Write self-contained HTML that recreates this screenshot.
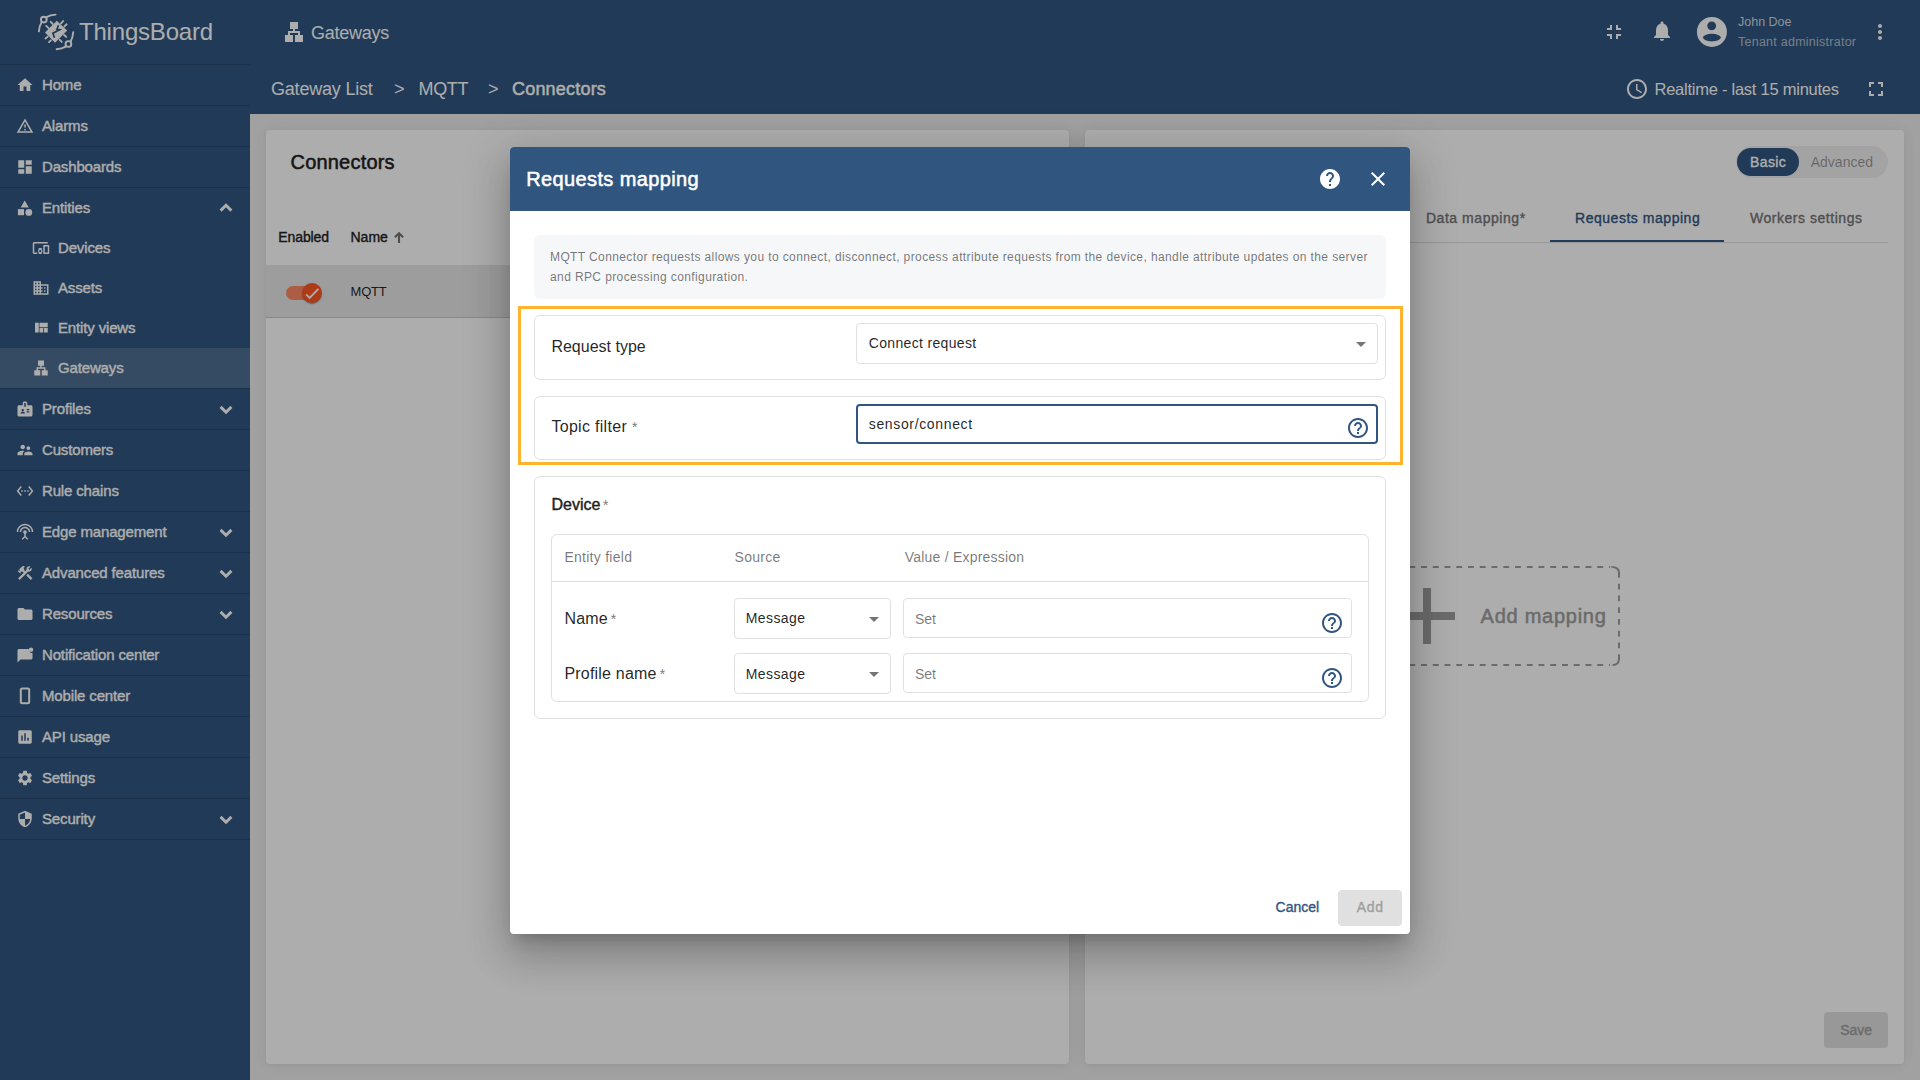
<!DOCTYPE html>
<html><head><meta charset="utf-8"><style>
*{box-sizing:border-box;margin:0;padding:0}
html,body{width:1920px;height:1080px;overflow:hidden}
body{font-family:"Liberation Sans",sans-serif;background:#eeeeee;position:relative;color:rgba(0,0,0,.87)}
.abs{position:absolute}
.tx{line-height:1;white-space:nowrap}
svg{display:block}
#side{position:absolute;left:0;top:0;width:250px;height:1080px;background:#305680}
#top{position:absolute;left:250px;top:0;width:1670px;height:114px;background:#305680}
.card{position:absolute;background:#fff;border-radius:4px;box-shadow:0 0 18px 2px rgba(0,0,0,.05),0 1px 4px rgba(0,0,0,.04)}
#backdrop{position:absolute;left:0;top:0;width:1920px;height:1080px;background:rgba(0,0,0,.32)}
#dlg{position:absolute;left:510px;top:147px;width:900px;height:787px;background:#fff;border-radius:4px;overflow:hidden;box-shadow:0 11px 15px -7px rgba(0,0,0,.2),0 24px 38px 3px rgba(0,0,0,.14),0 9px 46px 8px rgba(0,0,0,.12)}

</style></head><body>
<div id="side">
<div class="abs" style="left:0;top:64px;width:250px;height:1px;background:rgba(0,0,0,.12)"></div>
<svg class="abs" style="left:34px;top:10px" width="44" height="44" viewBox="0 0 44 44">
<g fill="none" stroke="#fff" stroke-width="1.9" stroke-linecap="round">
<circle cx="9.8" cy="9.6" r="2.9"/>
<path d="M12.6 7.1 Q16 5 21.6 4.6"/>
<path d="M7.4 12.7 Q5.2 16 4.9 21.4"/>
<circle cx="34.4" cy="34" r="2.9"/>
<path d="M31.7 36.6 Q28 38.8 22.6 39.2"/>
<path d="M36.8 31.2 Q38.8 27.5 39.2 22.2"/>
<path d="M12.2 15.9 L14.6 18.1 M16.7 11.8 L18.7 13.9 M29.1 11 L27.1 13.3 M32.6 14.3 L30.4 16.4 M32.2 26.9 L30.1 25 M27.7 31.8 L25.8 29.8 M11.4 28.5 L13.6 26.7 M15 32.2 L16.9 30.3"/>
</g>
<path fill="#fff" d="M22.8 10.8 L33.2 20.4 L21 32.8 L11 22.6 Z"/>
<path d="M24.5 15.3 L22.9 19.3 L25.7 19.7 L18.9 23.2 L20.5 27.8" fill="none" stroke="#305680" stroke-width="1.7" stroke-linejoin="miter"/>
</svg>
<div class="abs tx" style="left:79px;top:19.80px;font-size:24px;font-weight:normal;color:#ffffff;letter-spacing:-0.2px;">ThingsBoard</div>
<div class="abs" style="left:0;top:105px;width:250px;height:1px;background:rgba(0,0,0,.12)"></div>
<svg class="abs" style="left:16px;top:76px;" width="18" height="18" viewBox="0 0 24 24"><path fill="#fff" d="M10 20v-6h4v6h5v-8h3L12 3 2 12h3v8z"/></svg>
<div class="abs tx" style="left:42px;top:77.45px;font-size:15px;font-weight:normal;color:#ffffff;letter-spacing:-0.15px;-webkit-text-stroke:0.39px #ffffff;">Home</div>
<div class="abs" style="left:0;top:146px;width:250px;height:1px;background:rgba(0,0,0,.12)"></div>
<svg class="abs" style="left:16px;top:117px;" width="18" height="18" viewBox="0 0 24 24"><path fill="#fff" d="M12 5.99L19.53 19H4.47L12 5.99M12 2L1 21h22L12 2zm1 14h-2v2h2v-2zm0-6h-2v4h2v-4z"/></svg>
<div class="abs tx" style="left:42px;top:118.45px;font-size:15px;font-weight:normal;color:#ffffff;letter-spacing:-0.15px;-webkit-text-stroke:0.39px #ffffff;">Alarms</div>
<div class="abs" style="left:0;top:187px;width:250px;height:1px;background:rgba(0,0,0,.12)"></div>
<svg class="abs" style="left:16px;top:158px;" width="18" height="18" viewBox="0 0 24 24"><path fill="#fff" d="M3 13h8V3H3v10zm0 8h8v-6H3v6zm10 0h8V11h-8v10zm0-18v6h8V3h-8z"/></svg>
<div class="abs tx" style="left:42px;top:159.45px;font-size:15px;font-weight:normal;color:#ffffff;letter-spacing:-0.15px;-webkit-text-stroke:0.39px #ffffff;">Dashboards</div>
<div class="abs" style="left:0;top:388px;width:250px;height:1px;background:rgba(0,0,0,.12)"></div>
<svg class="abs" style="left:16px;top:200px" width="18" height="18" viewBox="0 0 18 18"><path fill="#fff" d="M8.7 0.6L12.8 7.4H4.6z"/><rect x="1.9" y="9.1" width="6.1" height="6.1" fill="#fff"/><circle cx="12.8" cy="12.4" r="3.4" fill="#fff"/></svg>
<div class="abs tx" style="left:42px;top:200.45px;font-size:15px;font-weight:normal;color:#ffffff;letter-spacing:-0.15px;-webkit-text-stroke:0.39px #ffffff;">Entities</div>
<svg class="abs" style="left:214px;top:196px" width="24" height="24" viewBox="0 0 24 24"><path fill="none" stroke="#fff" stroke-width="2.9" d="M6.6 14.6L12 9.3L17.4 14.6"/></svg>
<svg class="abs" style="left:32px;top:239px;" width="18" height="18" viewBox="0 0 24 24"><path fill="#fff" d="M3 6h18V4H3c-1.1 0-2 .9-2 2v12c0 1.1.9 2 2 2h4v-2H3V6zm10 6H9v1.78c-.61.55-1 1.33-1 2.22s.39 1.67 1 2.22V20h4v-1.78c.61-.55 1-1.34 1-2.22s-.39-1.67-1-2.22V12zm-2 5.5c-.83 0-1.5-.67-1.5-1.5s.67-1.5 1.5-1.5 1.5.67 1.5 1.5-.67 1.5-1.5 1.5zM22 8h-6c-.5 0-1 .5-1 1v10c0 .5.5 1 1 1h6c.5 0 1-.5 1-1V9c0-.5-.5-1-1-1zm-1 10h-4v-8h4v8z"/></svg>
<div class="abs tx" style="left:58px;top:240.45px;font-size:15px;font-weight:normal;color:#ffffff;letter-spacing:-0.15px;-webkit-text-stroke:0.39px #ffffff;">Devices</div>
<svg class="abs" style="left:32px;top:279px;" width="18" height="18" viewBox="0 0 24 24"><path fill="#fff" d="M12 7V3H2v18h20V7H12zM6 19H4v-2h2v2zm0-4H4v-2h2v2zm0-4H4V9h2v2zm0-4H4V5h2v2zm4 12H8v-2h2v2zm0-4H8v-2h2v2zm0-4H8V9h2v2zm0-4H8V5h2v2zm10 12h-8v-2h2v-2h-2v-2h2v-2h-2V9h8v10zm-2-8h-2v2h2v-2zm0 4h-2v2h2v-2z"/></svg>
<div class="abs tx" style="left:58px;top:280.45px;font-size:15px;font-weight:normal;color:#ffffff;letter-spacing:-0.15px;-webkit-text-stroke:0.39px #ffffff;">Assets</div>
<svg class="abs" style="left:32px;top:319px;" width="18" height="18" viewBox="0 0 24 24"><path fill="#fff" d="M10 18h5v-6h-5v6zm-6 0h5V5H4v13zm12 0h5v-6h-5v6zM10 5v6h11V5H10z"/></svg>
<div class="abs tx" style="left:58px;top:320.45px;font-size:15px;font-weight:normal;color:#ffffff;letter-spacing:-0.15px;-webkit-text-stroke:0.39px #ffffff;">Entity views</div>
<div class="abs" style="left:0;top:348px;width:250px;height:40px;background:rgba(255,255,255,.15)"></div>
<svg class="abs" style="left:32px;top:359px;" width="18" height="18" viewBox="0 0 24 24"><path fill="#fff" d="M13 22h8v-7h-3v-4h-5V9h3V2H8v7h3v2H6v4H3v7h8v-7H8v-2h8v2h-3z"/></svg>
<div class="abs tx" style="left:58px;top:360.45px;font-size:15px;font-weight:normal;color:#ffffff;letter-spacing:-0.15px;-webkit-text-stroke:0.39px #ffffff;">Gateways</div>
<div class="abs" style="left:0;top:429px;width:250px;height:1px;background:rgba(0,0,0,.12)"></div>
<svg class="abs" style="left:16px;top:400px;" width="18" height="18" viewBox="0 0 24 24"><path fill="#fff" d="M20 7h-5V4c0-1.1-.9-2-2-2h-2c-1.1 0-2 .9-2 2v3H4c-1.1 0-2 .9-2 2v11c0 1.1.9 2 2 2h16c1.1 0 2-.9 2-2V9c0-1.1-.9-2-2-2zM9 12c.83 0 1.5.67 1.5 1.5S9.830 15 9 15s-1.5-.67-1.5-1.5S8.17 12 9 12zm3 6H6v-.43c0-.6.36-1.15.92-1.39.64-.28 1.34-.43 2.08-.43s1.44.15 2.08.43c.55.24.92.78.92 1.39V18zm1-9h-2V4h2v5zm4.25 7.5h-2.5c-.41 0-.75-.34-.75-.75s.34-.75.75-.75h2.5c.41 0 .75.34.75.75s-.34.75-.75.75zm0-3h-2.5c-.41 0-.75-.34-.75-.75s.34-.75.75-.75h2.5c.41 0 .75.34.75.75s-.34.75-.75.75z"/></svg>
<div class="abs tx" style="left:42px;top:401.45px;font-size:15px;font-weight:normal;color:#ffffff;letter-spacing:-0.15px;-webkit-text-stroke:0.39px #ffffff;">Profiles</div>
<svg class="abs" style="left:214px;top:397px" width="24" height="24" viewBox="0 0 24 24"><path fill="none" stroke="#fff" stroke-width="2.9" d="M6.6 9.9L12 15.2L17.4 9.9"/></svg>
<div class="abs" style="left:0;top:470px;width:250px;height:1px;background:rgba(0,0,0,.12)"></div>
<svg class="abs" style="left:16px;top:441px;" width="18" height="18" viewBox="0 0 24 24"><path fill="#fff" d="M16.5 12c1.38 0 2.49-1.12 2.49-2.5S17.88 7 16.5 7C15.12 7 14 8.12 14 9.5s1.12 2.5 2.5 2.5zM9 11c1.66 0 2.99-1.34 2.99-3S10.66 5 9 5C7.34 5 6 6.34 6 8s1.34 3 3 3zm7.5 3c-1.83 0-5.5.92-5.5 2.75V19h11v-2.25c0-1.830-3.67-2.75-5.5-2.75zM9 13c-2.33 0-7 1.17-7 3.5V19h7v-2.25c0-.85.33-2.34 2.37-3.47C10.5 13.1 9.66 13 9 13z"/></svg>
<div class="abs tx" style="left:42px;top:442.45px;font-size:15px;font-weight:normal;color:#ffffff;letter-spacing:-0.15px;-webkit-text-stroke:0.39px #ffffff;">Customers</div>
<div class="abs" style="left:0;top:511px;width:250px;height:1px;background:rgba(0,0,0,.12)"></div>
<svg class="abs" style="left:16px;top:482px;" width="18" height="18" viewBox="0 0 24 24"><path fill="#fff" d="M7.77 6.76L6.23 5.48.82 12l5.41 6.52 1.54-1.28L3.42 12l4.35-5.24zM7 13h2v-2H7v2zm10-2h-2v2h2v-2zm-6 2h2v-2h-2v2zm6.77-7.52l-1.54 1.28L20.58 12l-4.35 5.24 1.54 1.28L23.18 12l-5.41-6.52z"/></svg>
<div class="abs tx" style="left:42px;top:483.45px;font-size:15px;font-weight:normal;color:#ffffff;letter-spacing:-0.15px;-webkit-text-stroke:0.39px #ffffff;">Rule chains</div>
<div class="abs" style="left:0;top:552px;width:250px;height:1px;background:rgba(0,0,0,.12)"></div>
<svg class="abs" style="left:16px;top:523px;" width="18" height="18" viewBox="0 0 24 24"><path fill="#fff" d="M12 5c-3.87 0-7 3.13-7 7h2c0-2.76 2.24-5 5-5s5 2.24 5 5h2c0-3.87-3.13-7-7-7zm1 9.29c.88-.39 1.5-1.26 1.5-2.29 0-1.38-1.12-2.5-2.5-2.5S9.5 10.62 9.5 12c0 1.02.62 1.9 1.5 2.29v3.3L7.59 21 9 22.41l3-3 3 3L16.41 21 13 17.590v-3.3zM12 1C5.93 1 1 5.93 1 12h2c0-4.97 4.03-9 9-9s9 4.03 9 9h2c0-6.07-4.93-11-11-11z"/></svg>
<div class="abs tx" style="left:42px;top:524.45px;font-size:15px;font-weight:normal;color:#ffffff;letter-spacing:-0.15px;-webkit-text-stroke:0.39px #ffffff;">Edge management</div>
<svg class="abs" style="left:214px;top:520px" width="24" height="24" viewBox="0 0 24 24"><path fill="none" stroke="#fff" stroke-width="2.9" d="M6.6 9.9L12 15.2L17.4 9.9"/></svg>
<div class="abs" style="left:0;top:593px;width:250px;height:1px;background:rgba(0,0,0,.12)"></div>
<svg class="abs" style="left:16px;top:564px;" width="18" height="18" viewBox="0 0 24 24"><path fill="#fff" d="M13.78 15.3L19.78 21.3L21.89 19.14L15.89 13.14L13.78 15.3M17.5 10.1C17.11 10.1 16.69 10.05 16.36 9.91L4.97 21.25L2.86 19.14L10.27 11.74L8.5 9.96L7.78 10.66L6.33 9.25V12.11L5.63 12.81L2.11 9.25L2.81 8.55H5.62L4.22 7.14L7.78 3.58C8.95 2.41 10.83 2.41 12 3.58L9.89 5.740L11.3 7.14L10.59 7.85L12.38 9.63L14.2 7.75C14.06 7.42 14 7 14 6.63C14 4.66 15.55 3.11 17.5 3.11C18.09 3.11 18.61 3.25 19.08 3.53L16.41 6.2L17.91 7.7L20.58 5.03C20.86 5.5 21 6 21 6.63C21 8.55 19.45 10.1 17.5 10.1Z"/></svg>
<div class="abs tx" style="left:42px;top:565.45px;font-size:15px;font-weight:normal;color:#ffffff;letter-spacing:-0.15px;-webkit-text-stroke:0.39px #ffffff;">Advanced features</div>
<svg class="abs" style="left:214px;top:561px" width="24" height="24" viewBox="0 0 24 24"><path fill="none" stroke="#fff" stroke-width="2.9" d="M6.6 9.9L12 15.2L17.4 9.9"/></svg>
<div class="abs" style="left:0;top:634px;width:250px;height:1px;background:rgba(0,0,0,.12)"></div>
<svg class="abs" style="left:16px;top:605px;" width="18" height="18" viewBox="0 0 24 24"><path fill="#fff" d="M10 4H4c-1.1 0-1.99.9-1.99 2L2 18c0 1.1.9 2 2 2h16c1.1 0 2-.9 2-2V8c0-1.1-.9-2-2-2h-8l-2-2z"/></svg>
<div class="abs tx" style="left:42px;top:606.45px;font-size:15px;font-weight:normal;color:#ffffff;letter-spacing:-0.15px;-webkit-text-stroke:0.39px #ffffff;">Resources</div>
<svg class="abs" style="left:214px;top:602px" width="24" height="24" viewBox="0 0 24 24"><path fill="none" stroke="#fff" stroke-width="2.9" d="M6.6 9.9L12 15.2L17.4 9.9"/></svg>
<div class="abs" style="left:0;top:675px;width:250px;height:1px;background:rgba(0,0,0,.12)"></div>
<svg class="abs" style="left:16px;top:646px;" width="18" height="18" viewBox="0 0 24 24"><path fill="#fff" d="M20 2a3 3 0 1 0 0 6 3 3 0 0 0 0-6zM17 4H4c-1.1 0-2 .9-2 2v16l4-4h14c1.1 0 2-.9 2-2V9.3A4.5 4.5 0 0 1 17 4z"/></svg>
<div class="abs tx" style="left:42px;top:647.45px;font-size:15px;font-weight:normal;color:#ffffff;letter-spacing:-0.15px;-webkit-text-stroke:0.39px #ffffff;">Notification center</div>
<div class="abs" style="left:0;top:716px;width:250px;height:1px;background:rgba(0,0,0,.12)"></div>
<svg class="abs" style="left:0px;top:676px" width="50" height="40" viewBox="0 676 50 40"><rect x="20.8" y="688.5" width="8.4" height="14.8" rx="1.5" fill="none" stroke="#fff" stroke-width="2"/></svg>
<div class="abs tx" style="left:42px;top:688.45px;font-size:15px;font-weight:normal;color:#ffffff;letter-spacing:-0.15px;-webkit-text-stroke:0.39px #ffffff;">Mobile center</div>
<div class="abs" style="left:0;top:757px;width:250px;height:1px;background:rgba(0,0,0,.12)"></div>
<svg class="abs" style="left:16px;top:728px;" width="18" height="18" viewBox="0 0 24 24"><path fill="#fff" d="M19 3H5c-1.1 0-2 .9-2 2v14c0 1.1.9 2 2 2h14c1.1 0 2-.9 2-2V5c0-1.1-.9-2-2-2zM9 17H7v-7h2v7zm4 0h-2V7h2v10zm4 0h-2v-4h2v4z"/></svg>
<div class="abs tx" style="left:42px;top:729.45px;font-size:15px;font-weight:normal;color:#ffffff;letter-spacing:-0.15px;-webkit-text-stroke:0.39px #ffffff;">API usage</div>
<div class="abs" style="left:0;top:798px;width:250px;height:1px;background:rgba(0,0,0,.12)"></div>
<svg class="abs" style="left:16px;top:769px;" width="18" height="18" viewBox="0 0 24 24"><path fill="#fff" d="M19.14 12.94c.04-.3.06-.61.06-.94 0-.32-.02-.64-.07-.94l2.03-1.58c.18-.14.23-.41.12-.61l-1.92-3.32c-.12-.22-.37-.29-.59-.22l-2.39.96c-.5-.38-1.03-.7-1.62-.94l-.36-2.54c-.04-.24-.24-.41-.48-.41h-3.84c-.24 0-.43.17-.47.41l-.36 2.54c-.59.24-1.13.57-1.62.94l-2.39-.96c-.22-.08-.47 0-.59.22L2.74 8.87c-.12.21-.08.47.12.61l2.03 1.58c-.05.3-.09.63-.09.94s.02.64.07.94l-2.03 1.58c-.18.14-.23.41-.12.61l1.92 3.32c.12.22.37.29.59.22l2.39-.96c.5.38 1.03.7 1.62.94l.36 2.54c.05.24.24.41.48.41h3.84c.24 0 .44-.17.47-.41l.36-2.54c.59-.24 1.13-.56 1.62-.94l2.39.96c.22.08.47 0 .59-.22l1.92-3.32c.12-.22.07-.47-.12-.61l-2.01-1.58zM12 15.6c-1.98 0-3.6-1.62-3.6-3.6s1.62-3.6 3.6-3.6 3.6 1.62 3.6 3.6-1.62 3.6-3.6 3.6z"/></svg>
<div class="abs tx" style="left:42px;top:770.45px;font-size:15px;font-weight:normal;color:#ffffff;letter-spacing:-0.15px;-webkit-text-stroke:0.39px #ffffff;">Settings</div>
<div class="abs" style="left:0;top:839px;width:250px;height:1px;background:rgba(0,0,0,.12)"></div>
<svg class="abs" style="left:16px;top:810px;" width="18" height="18" viewBox="0 0 24 24"><path fill="#fff" d="M12 1L3 5v6c0 5.55 3.84 10.74 9 12 5.16-1.26 9-6.45 9-12V5l-9-4zm0 10.99h7c-.53 4.12-3.28 7.79-7 8.94V12H5V6.3l7-3.11v8.8z"/></svg>
<div class="abs tx" style="left:42px;top:811.45px;font-size:15px;font-weight:normal;color:#ffffff;letter-spacing:-0.15px;-webkit-text-stroke:0.39px #ffffff;">Security</div>
<svg class="abs" style="left:214px;top:807px" width="24" height="24" viewBox="0 0 24 24"><path fill="none" stroke="#fff" stroke-width="2.9" d="M6.6 9.9L12 15.2L17.4 9.9"/></svg>
</div>
<div id="top">
</div>
<svg class="abs" style="left:282px;top:20px;" width="24" height="24" viewBox="0 0 24 24"><path fill="#fff" d="M13 22h8v-7h-3v-4h-5V9h3V2H8v7h3v2H6v4H3v7h8v-7H8v-2h8v2h-3z"/></svg>
<div class="abs tx" style="left:311px;top:23.70px;font-size:18px;font-weight:normal;color:#ffffff;letter-spacing:-0.25px;">Gateways</div>
<div class="abs tx" style="left:271px;top:79.50px;font-size:18px;font-weight:normal;color:#ffffff;letter-spacing:-0.2px;">Gateway List</div>
<div class="abs tx" style="left:394px;top:79.50px;font-size:18px;font-weight:normal;color:#ffffff;letter-spacing:0px;">&gt;</div>
<div class="abs tx" style="left:418.6px;top:79.50px;font-size:18px;font-weight:normal;color:#ffffff;letter-spacing:-0.4px;">MQTT</div>
<div class="abs tx" style="left:488px;top:79.50px;font-size:18px;font-weight:normal;color:#ffffff;letter-spacing:0px;">&gt;</div>
<div class="abs tx" style="left:512px;top:79.50px;font-size:18px;font-weight:normal;color:#ffffff;letter-spacing:0.2px;-webkit-text-stroke:0.47px #ffffff;">Connectors</div>
<svg class="abs" style="left:1602px;top:20px;" width="24" height="24" viewBox="0 0 24 24"><path fill="#fff" d="M5 16h3v3h2v-5H5v2zm3-8H5v2h5V5H8v3zm6 11h2v-3h3v-2h-5v5zm2-11V5h-2v5h5V8h-3z"/></svg>
<svg class="abs" style="left:1650px;top:19px;" width="24" height="24" viewBox="0 0 24 24"><path fill="#fff" d="M12 22c1.1 0 2-.9 2-2h-4c0 1.1.89 2 2 2zm6-6v-5c0-3.07-1.64-5.64-4.5-6.32V4c0-.83-.67-1.5-1.5-1.5s-1.5.67-1.5 1.5v.68C7.63 5.36 6 7.92 6 11v5l-2 2v1h16v-1l-2-2z"/></svg>
<svg class="abs" style="left:1690px;top:10px" width="45" height="45" viewBox="0 0 45 45"><path fill="#fff" fill-rule="evenodd" d="M21.9 6.9a15 15 0 1 0 0 30 15 15 0 1 0 0-30zM21.7 11.4a4.4 4.4 0 1 0 0 8.8 4.4 4.4 0 1 0 0-8.8zM12.9 27.6C15 22.6 28.6 22.6 30.9 27.6C28.6 32.8 15 32.8 12.9 27.6Z"/></svg>
<div class="abs tx" style="left:1738px;top:16.18px;font-size:12.5px;font-weight:normal;color:rgba(255,255,255,.78);letter-spacing:0px;">John Doe</div>
<div class="abs tx" style="left:1738px;top:36.17px;font-size:12.5px;font-weight:normal;color:rgba(255,255,255,.62);letter-spacing:0.25px;">Tenant administrator</div>
<svg class="abs" style="left:1868px;top:20px;" width="24" height="24" viewBox="0 0 24 24"><path fill="#fff" d="M12 8c1.1 0 2-.9 2-2s-.9-2-2-2-2 .9-2 2 .9 2 2 2zm0 2c-1.1 0-2 .9-2 2s.9 2 2 2 2-.9 2-2-.9-2-2-2zm0 6c-1.1 0-2 .9-2 2s.9 2 2 2 2-.9 2-2-.9-2-2-2z"/></svg>
<svg class="abs" style="left:1625px;top:77px;" width="24" height="24" viewBox="0 0 24 24"><path fill="#fff" d="M11.99 2C6.47 2 2 6.48 2 12s4.47 10 9.99 10C17.52 22 22 17.52 22 12S17.52 2 11.99 2zM12 20c-4.42 0-8-3.58-8-8s3.58-8 8-8 8 3.58 8 8-3.58 8-8 8zm.5-13H11v6l5.25 3.15.75-1.23-4.5-2.67z"/></svg>
<div class="abs tx" style="left:1654.5px;top:80.97px;font-size:16.5px;font-weight:normal;color:#ffffff;letter-spacing:-0.25px;">Realtime - last 15 minutes</div>
<svg class="abs" style="left:1864px;top:77.4px;" width="24" height="24" viewBox="0 0 24 24"><path fill="#fff" d="M7 14H5v5h5v-2H7v-3zm-2-4h2V7h3V5H5v5zm12 7h-3v2h5v-5h-2v3zM14 5v2h3v3h2V5h-5z"/></svg>
<div class="card" style="left:266px;top:130px;width:803px;height:934px">
</div>
<div class="abs tx" style="left:290.5px;top:151.60px;font-size:20px;font-weight:normal;color:#212121;letter-spacing:0.2px;-webkit-text-stroke:0.52px #212121;">Connectors</div>
<div class="abs tx" style="left:278.3px;top:230.10px;font-size:14px;font-weight:normal;color:#212121;letter-spacing:-0.1px;-webkit-text-stroke:0.36px #212121;">Enabled</div>
<div class="abs tx" style="left:350.5px;top:230.10px;font-size:14px;font-weight:normal;color:#212121;letter-spacing:0px;-webkit-text-stroke:0.36px #212121;">Name</div>
<svg class="abs" style="left:385px;top:225px" width="25" height="25" viewBox="0 0 25 25"><path fill="none" stroke="#757575" stroke-width="2.1" d="M14 8.2V17.9M9.9 12.3L14 8.2L18.1 12.3"/></svg>
<div class="abs" style="left:266px;top:265px;width:803px;height:53px;background:#e8e8e8;border-bottom:1px solid rgba(0,0,0,.12)"></div>
<div class="abs tx" style="left:350.5px;top:285.25px;font-size:13px;font-weight:normal;color:rgba(0,0,0,.87);letter-spacing:-0.2px;">MQTT</div>
<div class="abs" style="left:286px;top:286px;width:34px;height:14px;border-radius:7px;background:#ff8a65"></div>
<div class="abs" style="left:302px;top:283px;width:20px;height:20px;border-radius:10px;background:#ff5722;box-shadow:0 2px 1px -1px rgba(0,0,0,.2),0 1px 1px 0 rgba(0,0,0,.14),0 1px 3px 0 rgba(0,0,0,.12)"></div>
<svg class="abs" style="left:300px;top:282px" width="24" height="24" viewBox="0 0 24 24"><path fill="none" stroke="#fff" stroke-width="1.8" d="M6.1 12.4L9.6 15.9L18.4 6.8"/></svg>
<div class="card" style="left:1085px;top:130px;width:819px;height:934px">
</div>
<div class="abs" style="left:1736px;top:146px;width:152px;height:32px;border-radius:16px;background:rgba(0,0,0,.06)"></div>
<div class="abs" style="left:1737px;top:148px;width:62px;height:28px;border-radius:14px;background:#305680"></div>
<div class="abs tx" style="left:1750px;top:155.10px;font-size:14px;font-weight:normal;color:#ffffff;letter-spacing:0.4px;-webkit-text-stroke:0.36px #ffffff;">Basic</div>
<div class="abs tx" style="left:1810.75px;top:155.10px;font-size:14px;font-weight:normal;color:rgba(0,0,0,.38);letter-spacing:0px;">Advanced</div>
<div class="abs" style="left:1101px;top:242px;width:787px;height:1px;background:rgba(0,0,0,.12)"></div>
<div class="abs tx" style="left:1425.9px;top:211.00px;font-size:14px;font-weight:normal;color:#757575;letter-spacing:0.55px;-webkit-text-stroke:0.36px #757575;">Data mapping*</div>
<div class="abs tx" style="left:1575px;top:211.10px;font-size:14px;font-weight:normal;color:#305680;letter-spacing:0.53px;-webkit-text-stroke:0.36px #305680;">Requests mapping</div>
<div class="abs tx" style="left:1750px;top:211.10px;font-size:14px;font-weight:normal;color:#757575;letter-spacing:0.53px;-webkit-text-stroke:0.36px #757575;">Workers settings</div>
<div class="abs" style="left:1550px;top:240px;width:174px;height:2px;background:#305680"></div>
<svg class="abs" style="left:1400px;top:560px" width="230" height="115" viewBox="0 0 230 115"><g fill="none" stroke="#9e9e9e" stroke-width="2"><path stroke-dasharray="5.9 5.85" d="M9.25 7H210M9.25 105H210M219 11.9V101"/><path d="M211.5 7Q219 7 219 13M219 98.5Q219 105 212.5 105"/></g></svg>
<svg class="abs" style="left:1379px;top:568px;" width="96" height="96" viewBox="0 0 24 24"><path fill="rgba(0,0,0,.38)" d="M19 13h-6v6h-2v-6H5v-2h6V5h2v6h6v2z"/></svg>
<div class="abs tx" style="left:1480.6px;top:605.75px;font-size:20px;font-weight:normal;color:#9e9e9e;letter-spacing:0.74px;-webkit-text-stroke:0.52px #9e9e9e;">Add mapping</div>
<div class="abs" style="left:1824px;top:1012px;width:64px;height:36px;border-radius:4px;background:rgba(0,0,0,.12)"></div>
<div class="abs tx" style="left:1840.2px;top:1023.00px;font-size:14px;font-weight:normal;color:#9e9e9e;letter-spacing:0px;-webkit-text-stroke:0.36px #9e9e9e;">Save</div>
<div id="backdrop"></div>
<div id="dlg">
<div class="abs" style="left:0;top:0;width:900px;height:64px;background:#305680"></div>
</div>
<div class="abs tx" style="left:526.25px;top:169.25px;font-size:20px;font-weight:normal;color:#ffffff;letter-spacing:0.37px;-webkit-text-stroke:0.52px #ffffff;">Requests mapping</div>
<svg class="abs" style="left:1318px;top:167px;" width="24" height="24" viewBox="0 0 24 24"><path fill="#fff" d="M12 2C6.48 2 2 6.48 2 12s4.48 10 10 10 10-4.48 10-10S17.52 2 12 2zm1 17h-2v-2h2v2zm2.07-7.75l-.9.92C13.45 12.9 13 13.5 13 15h-2v-.5c0-1.1.45-2.1 1.17-2.83l1.24-1.26c.37-.36.59-.86.59-1.41 0-1.1-.9-2-2-2s-2 .9-2 2H8c0-2.21 1.79-4 4-4s4 1.79 4 4c0 .88-.36 1.68-.93 2.25z"/></svg>
<svg class="abs" style="left:1366px;top:167px;" width="24" height="24" viewBox="0 0 24 24"><path fill="#fff" d="M19 6.41L17.59 5 12 10.59 6.41 5 5 6.41 10.59 12 5 17.59 6.41 19 12 13.41 17.590 19 19 17.59 13.41 12z"/></svg>
<div class="abs" style="left:534px;top:235px;width:852px;height:64px;border-radius:6px;background:#f6f7f9"></div>
<div class="abs tx" style="left:550px;top:251.05px;font-size:12px;font-weight:normal;color:rgba(0,0,0,.54);letter-spacing:0.39px;white-space:nowrap">MQTT Connector requests allows you to connect, disconnect, process attribute requests from the device, handle attribute updates on the server</div>
<div class="abs tx" style="left:550px;top:271.05px;font-size:12px;font-weight:normal;color:rgba(0,0,0,.54);letter-spacing:0.39px;white-space:nowrap">and RPC processing configuration.</div>
<div class="abs" style="left:518px;top:306px;width:885px;height:159px;border:3px solid #ffb32f"></div>
<div class="abs" style="left:534px;top:315px;width:852px;height:65px;border:1px solid #e0e0e0;border-radius:6px"></div>
<div class="abs tx" style="left:551.4px;top:339.10px;font-size:16px;font-weight:normal;color:rgba(0,0,0,.87);letter-spacing:0px;">Request type</div>
<div class="abs" style="left:856px;top:323px;width:522px;height:41px;border:1px solid #e0e0e0;border-radius:4px"></div>
<div class="abs tx" style="left:868.75px;top:336.20px;font-size:14px;font-weight:normal;color:rgba(0,0,0,.87);letter-spacing:0.33px;">Connect request</div>
<svg class="abs" style="left:1356px;top:342px" width="10" height="5" viewBox="0 0 10 5"><path fill="rgba(0,0,0,.54)" d="M0 0h10L5 5z"/></svg>
<div class="abs" style="left:534px;top:396px;width:852px;height:64px;border:1px solid #e0e0e0;border-radius:6px"></div>
<div class="abs tx" style="left:551.4px;top:419.20px;font-size:16px;font-weight:normal;color:rgba(0,0,0,.87);letter-spacing:0.3px;">Topic filter</div>
<div class="abs tx" style="left:631.85px;top:419.30px;font-size:15.00px;color:rgba(0,0,0,.54)">*</div>
<div class="abs" style="left:856px;top:404px;width:522px;height:40px;border:2px solid #305680;border-radius:4px"></div>
<div class="abs tx" style="left:868.75px;top:416.85px;font-size:14px;font-weight:normal;color:rgba(0,0,0,.87);letter-spacing:0.65px;">sensor/connect</div>
<svg class="abs" style="left:1346px;top:416px;" width="24" height="24" viewBox="0 0 24 24"><path fill="#305680" d="M11 18h2v-2h-2v2zm1-16C6.48 2 2 6.48 2 12s4.48 10 10 10 10-4.48 10-10S17.52 2 12 2zm0 18c-4.41 0-8-3.59-8-8s3.59-8 8-8 8 3.59 8 8-3.59 8-8 8zm0-14c-2.21 0-4 1.79-4 4h2c0-1.1.9-2 2-2s2 .9 2 2c0 2-3 1.75-3 5h2c0-2.25 3-2.5 3-5 0-2.21-1.79-4-4-4z"/></svg>
<div class="abs" style="left:534px;top:476px;width:852px;height:243px;border:1px solid #e0e0e0;border-radius:6px"></div>
<div class="abs tx" style="left:551.5px;top:497.20px;font-size:16px;font-weight:normal;color:#212121;letter-spacing:0px;-webkit-text-stroke:0.42px #212121;">Device</div>
<div class="abs tx" style="left:602.85px;top:496.50px;font-size:15.00px;color:rgba(0,0,0,.54)">*</div>
<div class="abs" style="left:551px;top:534px;width:818px;height:168px;border:1px solid #e0e0e0;border-radius:6px"></div>
<div class="abs" style="left:552px;top:581px;width:816px;height:1px;background:#e0e0e0"></div>
<div class="abs tx" style="left:564.4px;top:550.30px;font-size:14px;font-weight:normal;color:rgba(0,0,0,.54);letter-spacing:0.27px;">Entity field</div>
<div class="abs tx" style="left:734.6px;top:550.30px;font-size:14px;font-weight:normal;color:rgba(0,0,0,.54);letter-spacing:0.25px;">Source</div>
<div class="abs tx" style="left:904.7px;top:550.30px;font-size:14px;font-weight:normal;color:rgba(0,0,0,.54);letter-spacing:0.22px;">Value / Expression</div>
<div class="abs tx" style="left:564.4px;top:610.50px;font-size:16px;font-weight:normal;color:rgba(0,0,0,.87);letter-spacing:0.2px;">Name</div>
<div class="abs tx" style="left:610.55px;top:610.50px;font-size:15.00px;color:rgba(0,0,0,.54)">*</div>
<div class="abs" style="left:734px;top:598px;width:157px;height:41px;border:1px solid #e0e0e0;border-radius:4px"></div>
<div class="abs tx" style="left:745.8px;top:611.40px;font-size:14px;font-weight:normal;color:rgba(0,0,0,.87);letter-spacing:0.4px;">Message</div>
<svg class="abs" style="left:869px;top:617px" width="10" height="5" viewBox="0 0 10 5"><path fill="rgba(0,0,0,.54)" d="M0 0h10L5 5z"/></svg>
<div class="abs" style="left:903px;top:598px;width:449px;height:40px;border:1px solid #e0e0e0;border-radius:4px"></div>
<div class="abs tx" style="left:915px;top:612.20px;font-size:14px;font-weight:normal;color:rgba(0,0,0,.54);letter-spacing:0px;">Set</div>
<svg class="abs" style="left:1320px;top:611px;" width="24" height="24" viewBox="0 0 24 24"><path fill="#305680" d="M11 18h2v-2h-2v2zm1-16C6.48 2 2 6.48 2 12s4.48 10 10 10 10-4.48 10-10S17.52 2 12 2zm0 18c-4.41 0-8-3.59-8-8s3.59-8 8-8 8 3.59 8 8-3.59 8-8 8zm0-14c-2.21 0-4 1.79-4 4h2c0-1.1.9-2 2-2s2 .9 2 2c0 2-3 1.75-3 5h2c0-2.25 3-2.5 3-5 0-2.21-1.79-4-4-4z"/></svg>
<div class="abs tx" style="left:564.4px;top:665.70px;font-size:16px;font-weight:normal;color:rgba(0,0,0,.87);letter-spacing:0.2px;">Profile name</div>
<div class="abs tx" style="left:659.45px;top:665.70px;font-size:15.00px;color:rgba(0,0,0,.54)">*</div>
<div class="abs" style="left:734px;top:653px;width:157px;height:41px;border:1px solid #e0e0e0;border-radius:4px"></div>
<div class="abs tx" style="left:745.8px;top:666.60px;font-size:14px;font-weight:normal;color:rgba(0,0,0,.87);letter-spacing:0.4px;">Message</div>
<svg class="abs" style="left:869px;top:672px" width="10" height="5" viewBox="0 0 10 5"><path fill="rgba(0,0,0,.54)" d="M0 0h10L5 5z"/></svg>
<div class="abs" style="left:903px;top:653px;width:449px;height:40px;border:1px solid #e0e0e0;border-radius:4px"></div>
<div class="abs tx" style="left:915px;top:667.40px;font-size:14px;font-weight:normal;color:rgba(0,0,0,.54);letter-spacing:0px;">Set</div>
<svg class="abs" style="left:1320px;top:666px;" width="24" height="24" viewBox="0 0 24 24"><path fill="#305680" d="M11 18h2v-2h-2v2zm1-16C6.48 2 2 6.48 2 12s4.48 10 10 10 10-4.48 10-10S17.52 2 12 2zm0 18c-4.41 0-8-3.59-8-8s3.59-8 8-8 8 3.59 8 8-3.59 8-8 8zm0-14c-2.21 0-4 1.79-4 4h2c0-1.1.9-2 2-2s2 .9 2 2c0 2-3 1.75-3 5h2c0-2.25 3-2.5 3-5 0-2.21-1.79-4-4-4z"/></svg>
<div class="abs tx" style="left:1275.6px;top:900.10px;font-size:14px;font-weight:normal;color:#305680;letter-spacing:0px;-webkit-text-stroke:0.36px #305680;">Cancel</div>
<div class="abs" style="left:1338px;top:890px;width:64px;height:36px;border-radius:4px;background:rgba(0,0,0,.12)"></div>
<div class="abs tx" style="left:1356.85px;top:899.95px;font-size:14px;font-weight:normal;color:#9e9e9e;letter-spacing:0.6px;-webkit-text-stroke:0.36px #9e9e9e;">Add</div>
</body></html>
